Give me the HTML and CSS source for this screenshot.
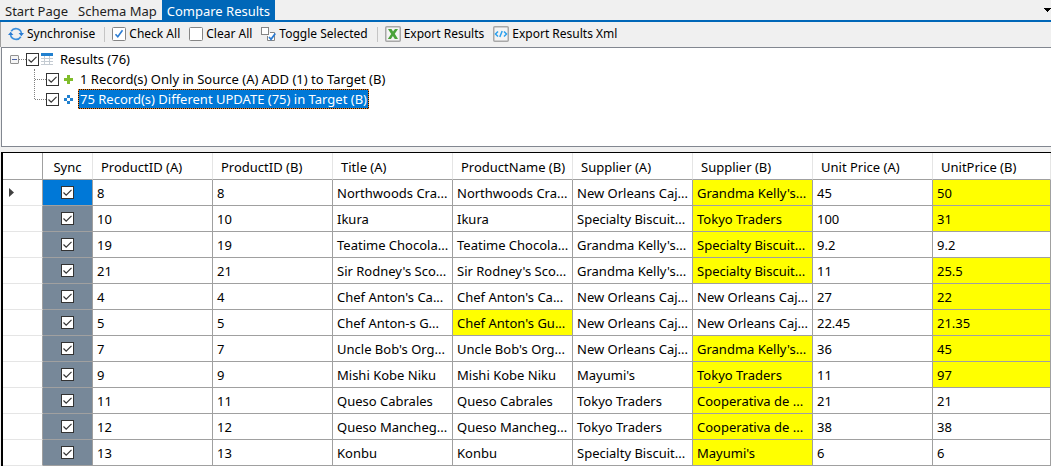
FILE: index.html
```html
<!DOCTYPE html>
<html lang="en">
<head>
<meta charset="utf-8">
<title>Compare Results</title>
<link rel="stylesheet" href="styles.css">
</head>
<body>
<nav class="tabs">
  <button class="tab">Start Page</button>
  <button class="tab">Schema Map</button>
  <button class="tab active">Compare Results</button>
  <button class="tab-menu" aria-label="Open tabs"><svg width="7" height="4" viewBox="0 0 7 4"><path d="M0 0h7v1H6v1H5v1H4v1H3V3H2V2H1V1H0z"/></svg></button>
</nav>
<div class="toolbar">
  <button class="tool sync"><svg width="16" height="16" viewBox="0 0 16 16"><path d="M3.200 5.200A5.600 5.600 0 0 1 13.400 7M12.800 10.800A5.600 5.600 0 0 1 2.600 9" fill="none" stroke="#3a8fdd" stroke-width="1.600"/><path d="M10.600 7H16l-2.700 3.200zM0 9h5.400L2.700 5.800z" fill="#2b7cd3"/></svg>Synchronise</button>
  <span class="separator"></span>
  <button class="tool check-all"><svg width="14" height="14" viewBox="0 0 14 14"><rect x=".5" y=".5" width="13" height="13" rx="1" fill="#fff" stroke="#858585"/><path d="M3.5 7.3l2.3 2.5 4.7-6.5" fill="none" stroke="#2b7cd3" stroke-width="1.6"/></svg>Check All</button>
  <button class="tool clear-all"><svg width="14" height="14" viewBox="0 0 14 14"><rect x=".5" y=".5" width="13" height="13" rx="1" fill="#fff" stroke="#858585"/></svg>Clear All</button>
  <button class="tool toggle"><svg width="15" height="14" viewBox="0 0 15 14"><path d="M9 5.500h4.500v8h-7V9" fill="#fff" stroke="#858585"/><rect x=".5" y=".5" width="7" height="7" fill="#fff" stroke="#858585"/><path d="M8 10l2 2.300 4.300-5.800" fill="none" stroke="#2b7cd3" stroke-width="1.700"/></svg>Toggle Selected</button>
  <span class="separator"></span>
  <button class="tool export"><svg width="16" height="16" viewBox="0 0 16 16"><rect x=".75" y=".75" width="14.5" height="14.5" rx="1" fill="#f4f4f4" stroke="#a8a8a8" stroke-width="1.5"/><path d="M3 3h3.500L8 5.600 10 3h3L9.800 7.700l3.200 5.200H9.800L7.900 10l-2 2.900H2.800L6.200 8z" fill="#4aa23a"/></svg>Export Results</button>
  <button class="tool xml"><svg width="16" height="16" viewBox="0 0 16 16"><rect x=".75" y=".75" width="14.5" height="14.5" rx="1" fill="#f4f4f4" stroke="#a8a8a8" stroke-width="1.5"/><path d="M5 5.500L2.500 8 5 10.500M11 5.500L13.500 8 11 10.500M9.200 5l-2.400 6" fill="none" stroke="#2ba0ee" stroke-width="1.500"/></svg>Export Results Xml</button>
</div>
<section class="tree">
  <div class="node root">
    <button class="collapse" aria-label="Collapse Results"></button><span class="link"></span>
    <input class="box" type="checkbox" id="all" checked>
    <svg class="grid-icon" width="12" height="12" viewBox="0 0 12 12"><path fill="#c4cbd2" d="M0 3h12v9H0z"/><path fill="#2180cf" d="M0 0h12v3H0z"/><path d="M0 3h3v2H0zm4 0h4v2H4zm5 0h3v2H9zM0 6h3v2H0zm4 0h4v2H4zm5 0h3v2H9zM0 9h3v2H0zm4 0h4v2H4zm5 0h3v2H9z" fill="#fff"/></svg>
    <label class="name" for="all">Results (76)</label>
  </div>
  <div class="children">
    <div class="node">
      <span class="link"></span><input class="box" type="checkbox" id="add" checked>
      <svg class="mark" width="9" height="9" viewBox="0 0 9 9"><path d="M3 0h3v3h3v3H6v3H3V6H0V3h3z" fill="#80bd2b"/></svg>
      <label class="name" for="add">1 Record(s) Only in Source (A) ADD (1) to Target (B)</label>
    </div>
    <div class="node">
      <span class="link"></span><input class="box" type="checkbox" id="update" checked>
      <svg class="mark" width="9" height="9" viewBox="0 0 9 9"><path d="M3 0h3v3H3zM0 3h3v3H0zM6 3h3v3H6zM3 6h3v3H3z" fill="#2180cf"/></svg>
      <label class="name selected" for="update">75 Record(s) Different UPDATE (75) in Target (B)</label>
    </div>
  </div>
</section>
<main class="results">
<table>
<colgroup><col class="c-row"><col class="c-sync"><col class="c-data"><col class="c-data"><col class="c-data"><col class="c-data"><col class="c-data"><col class="c-data"><col class="c-data"><col></colgroup>
<thead><tr><th></th><th class="h-sync">Sync</th><th>ProductID (A)</th><th>ProductID (B)</th><th>Title (A)</th><th>ProductName (B)</th><th>Supplier (A)</th><th>Supplier (B)</th><th>Unit Price (A)</th><th>UnitPrice (B)</th></tr></thead>
<tbody>
<tr class="current"><td><svg width="5" height="9" viewBox="0 0 5 9"><path d="M0 0l5 4.500L0 9z" fill="#404040"/></svg></td><td><input class="box" type="checkbox" aria-label="Sync 8" checked></td><td>8</td><td>8</td><td>Northwoods Cra...</td><td>Northwoods Cra...</td><td>New Orleans Caj...</td><td class="diff">Grandma Kelly's...</td><td>45</td><td class="diff">50</td></tr>
<tr><td></td><td><input class="box" type="checkbox" aria-label="Sync 10" checked></td><td>10</td><td>10</td><td>Ikura</td><td>Ikura</td><td>Specialty Biscuit...</td><td class="diff">Tokyo Traders</td><td>100</td><td class="diff">31</td></tr>
<tr><td></td><td><input class="box" type="checkbox" aria-label="Sync 19" checked></td><td>19</td><td>19</td><td>Teatime Chocola...</td><td>Teatime Chocola...</td><td>Grandma Kelly's...</td><td class="diff">Specialty Biscuit...</td><td>9.2</td><td>9.2</td></tr>
<tr><td></td><td><input class="box" type="checkbox" aria-label="Sync 21" checked></td><td>21</td><td>21</td><td>Sir Rodney's Sco...</td><td>Sir Rodney's Sco...</td><td>Grandma Kelly's...</td><td class="diff">Specialty Biscuit...</td><td>11</td><td class="diff">25.5</td></tr>
<tr><td></td><td><input class="box" type="checkbox" aria-label="Sync 4" checked></td><td>4</td><td>4</td><td>Chef Anton's Ca...</td><td>Chef Anton's Ca...</td><td>New Orleans Caj...</td><td>New Orleans Caj...</td><td>27</td><td class="diff">22</td></tr>
<tr><td></td><td><input class="box" type="checkbox" aria-label="Sync 5" checked></td><td>5</td><td>5</td><td>Chef Anton-s G...</td><td class="diff">Chef Anton's Gu...</td><td>New Orleans Caj...</td><td>New Orleans Caj...</td><td>22.45</td><td class="diff">21.35</td></tr>
<tr><td></td><td><input class="box" type="checkbox" aria-label="Sync 7" checked></td><td>7</td><td>7</td><td>Uncle Bob's Org...</td><td>Uncle Bob's Org...</td><td>New Orleans Caj...</td><td class="diff">Grandma Kelly's...</td><td>36</td><td class="diff">45</td></tr>
<tr><td></td><td><input class="box" type="checkbox" aria-label="Sync 9" checked></td><td>9</td><td>9</td><td>Mishi Kobe Niku</td><td>Mishi Kobe Niku</td><td>Mayumi's</td><td class="diff">Tokyo Traders</td><td>11</td><td class="diff">97</td></tr>
<tr><td></td><td><input class="box" type="checkbox" aria-label="Sync 11" checked></td><td>11</td><td>11</td><td>Queso Cabrales</td><td>Queso Cabrales</td><td>Tokyo Traders</td><td class="diff">Cooperativa de ...</td><td>21</td><td>21</td></tr>
<tr><td></td><td><input class="box" type="checkbox" aria-label="Sync 12" checked></td><td>12</td><td>12</td><td>Queso Mancheg...</td><td>Queso Mancheg...</td><td>Tokyo Traders</td><td class="diff">Cooperativa de ...</td><td>38</td><td>38</td></tr>
<tr><td></td><td><input class="box" type="checkbox" aria-label="Sync 13" checked></td><td>13</td><td>13</td><td>Konbu</td><td>Konbu</td><td>Specialty Biscuit...</td><td class="diff">Mayumi's</td><td>6</td><td>6</td></tr>
</tbody>
</table>
</main>
</body>
</html>
```
FILE: styles.css
```css
* { box-sizing: border-box; }
body {
  margin: 0;
  background: #f0f0f0;
  color: #000;
  font: 13px/20px "Noto Sans", "Open Sans", sans-serif;
}
button {
  margin: 0;
  padding: 0;
  border: 0;
  background: none;
  color: inherit;
  font: inherit;
  white-space: nowrap;
}
svg { display: block; flex: none; }

.tabs { display: flex; height: 22px; border-bottom: 2px solid #0067b8; }
.tab { padding: 2px 5px 0; line-height: 18px; color: #1e1e1e; }
.tab.active { background: #0067b8; color: #fff; }
.tab-menu { margin-left: auto; }

.toolbar { display: flex; align-items: center; height: 25px; padding: 0 0 1px 7px; border-left: 1px solid #a0a0a0; font-size: 12px; }
.tool { display: flex; align-items: center; gap: 3px; margin-right: 9px; }
.separator { width: 1px; height: 15px; margin-right: 7px; background: #c5c5c5; }

.tree { height: 100px; margin-left: 1px; padding: 1px 0 0 8px; border: 1px solid #828790; border-right: 0; background: #fff; }
.node { display: flex; align-items: center; height: 20px; }
.collapse { width: 9px; height: 9px; border: 1px solid #919191; border-radius: 1px; background: linear-gradient(#4b63a7, #4b63a7) center / 5px 1px no-repeat, #f5f5f5; }
.link { width: 7px; border-top: 1px dotted #808080; }
.children { margin-left: 24px; border-left: 1px dotted #808080; height: 30px; }
.children .link { width: 11px; }
.box {
  appearance: none;
  flex: none;
  width: 13px;
  height: 13px;
  margin: 0;
  border: 1px solid #333;
  background: #fff;
}
.box:checked { background: #fff url("data:image/svg+xml,%3Csvg xmlns='http://www.w3.org/2000/svg' viewBox='0 0 11 11'%3E%3Cpath d='M1.5 5.5l2.700 2.700 5.300-5.300' fill='none' stroke='%23333' stroke-width='1.200'/%3E%3C/svg%3E"); }
.grid-icon { margin: 0 4px 0 2px; }
.mark { margin: 0 5px; }
.name { padding: 0 2px; line-height: 18px; border: 1px solid transparent; white-space: nowrap; }
.children .name { padding: 0 1px; }
.name.selected {
  border: 1px dotted #f58220;
  background: linear-gradient(#0078d7, #0078d7) padding-box, linear-gradient(#111, #111) border-box;
  color: #fff;
}

.results { margin: 5px 0 0 1px; border-top: 1px solid #000; border-left: 2px solid #000; background: #fff; }
table { width: 100%; table-layout: fixed; border-spacing: 0; }
.c-row { width: 40px; }
.c-sync { width: 50px; }
.c-data { width: 120px; }
th, td {
  height: 26px;
  padding: 0 0 0 4px;
  border-right: 1px solid #a0a0a0;
  border-bottom: 1px solid #a0a0a0;
  font-weight: 400;
  text-align: left;
  white-space: nowrap;
  overflow: hidden;
}
th { height: 27px; padding: 2px 0 0 8px; border-right-color: #e5e5e5; }
.h-sync { padding: 2px 0 0; text-align: center; }
th:first-child { border-right-color: #a0a0a0; }
td:first-child { padding-left: 6px; border-bottom-color: #e5e5e5; }
td:nth-child(2) { padding: 0 0 0 18px; background: #778899; }
td .box { display: block; }
.current td:nth-child(2) { background: #0078d7; }
.diff { background: #ff0; }
```
